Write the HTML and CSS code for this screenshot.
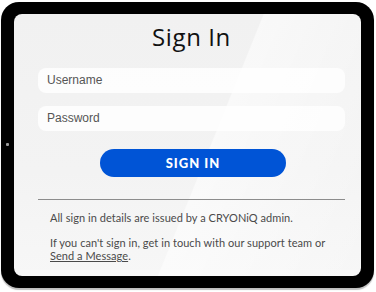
FILE: index.html
```html
<!DOCTYPE html>
<html>
<head>
<meta charset="utf-8">
<link rel="stylesheet" href="styles.css">
</head>
<body>
<div class="stage">
  <div class="tablet">
    <span class="home-dot"></span>
    <div class="screen">
      <h1 class="title">Sign In</h1>
      <div class="field">Username</div>
      <div class="field">Password</div>
      <div class="btn-row"><button class="btn">SIGN IN</button></div>
      <hr class="divider">
      <div class="info">
        <p>All sign in details are issued by a CRYONiQ admin.</p>
        <p>If you can't sign in, get in touch with our support team or <a class="link">Send a Message</a>.</p>
      </div>
    </div>
  </div>
</div>
</body>
</html>
```
FILE: styles.css
```css
html, body {
  margin: 0;
  padding: 0;
  background: #ffffff;
}
.stage {
  width: 376px;
  height: 292px;
  padding: 2px 2px 0 1px;
  box-sizing: border-box;
}
.tablet {
  position: relative;
  width: 373px;
  height: 286px;
  box-sizing: border-box;
  background: #000;
  border-radius: 18px;
  padding: 12px 13px 12px 13px;
  box-shadow: 0 2px 1px rgba(0,0,0,0.25);
}
.home-dot {
  position: absolute;
  left: 5px;
  top: 141px;
  width: 3px;
  height: 3px;
  background: #9a9a9a;
  border-radius: 1px;
}
.screen {
  height: 100%;
  border-radius: 8px;
  background:
    linear-gradient(112deg, rgba(255,255,255,0) 0%, rgba(255,255,255,0) 55%, rgba(255,255,255,0.55) 55.3%, rgba(255,255,255,0.25) 80%, rgba(255,255,255,0) 100%),
    linear-gradient(180deg, #f1f1f1 0%, #f3f3f3 60%, #f7f7f7 100%);
  padding: 0 16px 0 24px;
  box-sizing: border-box;
  display: flex;
  flex-direction: column;
  font-family: "Liberation Sans", Arial, sans-serif;
}
.title {
  margin: 8px 0 0 0;
  height: 46px;
  text-align: center;
  font-family: "Open Sans", sans-serif;
  font-weight: 500;
  font-size: 24px;
  line-height: 30px;
  color: #111;
  letter-spacing: 0.6px;
}
.field {
  height: 25px;
  border-radius: 8px;
  background: rgba(255,255,255,0.8);
  padding-left: 9px;
  font-size: 12px;
  line-height: 25px;
  color: #555;
  margin-bottom: 13px;
}
.btn-row {
  display: flex;
  justify-content: center;
  margin-top: 5px;
  padding-left: 3px;
}
.btn {
  width: 186px;
  height: 28px;
  border: none;
  border-radius: 14px;
  background: #0054d6;
  color: #fff;
  font-family: "Lato", sans-serif;
  font-weight: 900;
  font-size: 13px;
  letter-spacing: 1px;
  padding: 0;
}
.divider {
  margin: 22px 0 0 0;
  border: none;
  height: 1px;
  background: #8c8c8c;
}
.info {
  padding: 11px 12px 0 12px;
  font-family: "Lato", sans-serif;
  font-size: 11px;
  color: #4a4a4a;
  line-height: 13px;
  letter-spacing: 0.05px;
}
.info p {
  margin: 0 0 12px 0;
}
.link {
  color: #4a4a4a;
  text-decoration: underline;
}
```
